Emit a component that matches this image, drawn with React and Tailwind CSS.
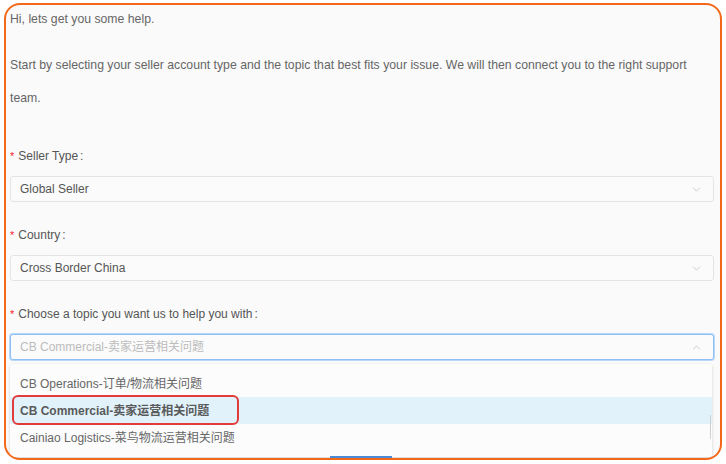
import { ChevronDown, ChevronUp } from 'lucide-react'

const font = { fontFamily: '"Liberation Sans", "Noto Sans CJK SC", sans-serif' }

const Label = ({ children }) => (
  <div className="flex items-center h-[20px] text-[12px] text-[#555]">
    <span className="text-[#f5222d] mr-[4px] text-[11px]">*</span>
    <span>{children}</span>
    <span className="ml-[2px]">:</span>
  </div>
)

const Select = ({ value, focused, placeholder }) => (
  <div
    className={`mt-[10px] h-[26px] rounded-[3px] flex items-center justify-between pl-[9px] pr-[10px] bg-[#fbfbfb] border ${
      focused ? 'border-[#8ec0f5] shadow-[0_0_0_1px_#b9d8f8]' : 'border-[#e4e4e4]'
    }`}
  >
    <span className={`text-[12px] ${placeholder ? 'text-[#bcbcbc]' : 'text-[#555]'}`}>{value}</span>
    {focused ? (
      <ChevronUp className="w-[13px] h-[13px] text-[#c4c4c4]" strokeWidth={1.5} />
    ) : (
      <ChevronDown className="w-[13px] h-[13px] text-[#c4c4c4]" strokeWidth={1.5} />
    )}
  </div>
)

const options = [
  'CB Operations-订单/物流相关问题',
  'CB Commercial-卖家运营相关问题',
  'Cainiao Logistics-菜鸟物流运营相关问题',
]

export default function App() {
  return (
    <div className="w-[726px] h-[464px] bg-white pt-[3px] pl-[4px]" style={font}>
      <div className="relative w-[718px] h-[457px] border-2 border-[#f4681a] rounded-[16px] bg-[#fafafa] overflow-hidden pl-[4px] pr-[6px]">
        <p className="mt-[2px] leading-[24px] text-[12.25px] text-[#666]">Hi, lets get you some help.</p>
        <p className="mt-[18px] leading-[33px] text-[12.25px] text-[#666] pr-[16px]">
          Start by selecting your seller account type and the topic that best fits your issue. We will then connect you to the right support team.
        </p>

        <div className="mt-[31px]">
          <Label>Seller Type</Label>
          <Select value="Global Seller" />
        </div>

        <div className="mt-[23px]">
          <Label>Country</Label>
          <Select value="Cross Border China" />
        </div>

        <div className="mt-[23px]">
          <Label>Choose a topic you want us to help you with</Label>
          <Select value="CB Commercial-卖家运营相关问题" focused placeholder />
        </div>

        <div className="relative mt-[4px] mr-[2px] bg-[#fcfcfc] shadow-[0_1px_3px_rgba(0,0,0,0.18)] pt-[6px] pb-[6px] rounded-[3px]">
          {options.map((o, i) => (
            <div
              key={o}
              className={`h-[27px] flex items-center pl-[10px] text-[12px] ${
                i === 1 ? 'bg-[#e1f2fb] text-[#5a5a5a] font-bold' : 'text-[#666]'
              }`}
            >
              {o}
            </div>
          ))}
          <div className="absolute right-[1px] top-[51px] w-[1px] h-[24px] bg-[#cfcfcf]" />
          {/* annotation */}
          <div className="absolute left-[2px] top-[31px] w-[227px] h-[30px] border-2 border-[#e23b3b] rounded-[6px]" />
        </div>

        <div className="absolute left-[324px] bottom-0 w-[62px] h-[2px] bg-[#4a8bd8]" />
      </div>
    </div>
  )
}
